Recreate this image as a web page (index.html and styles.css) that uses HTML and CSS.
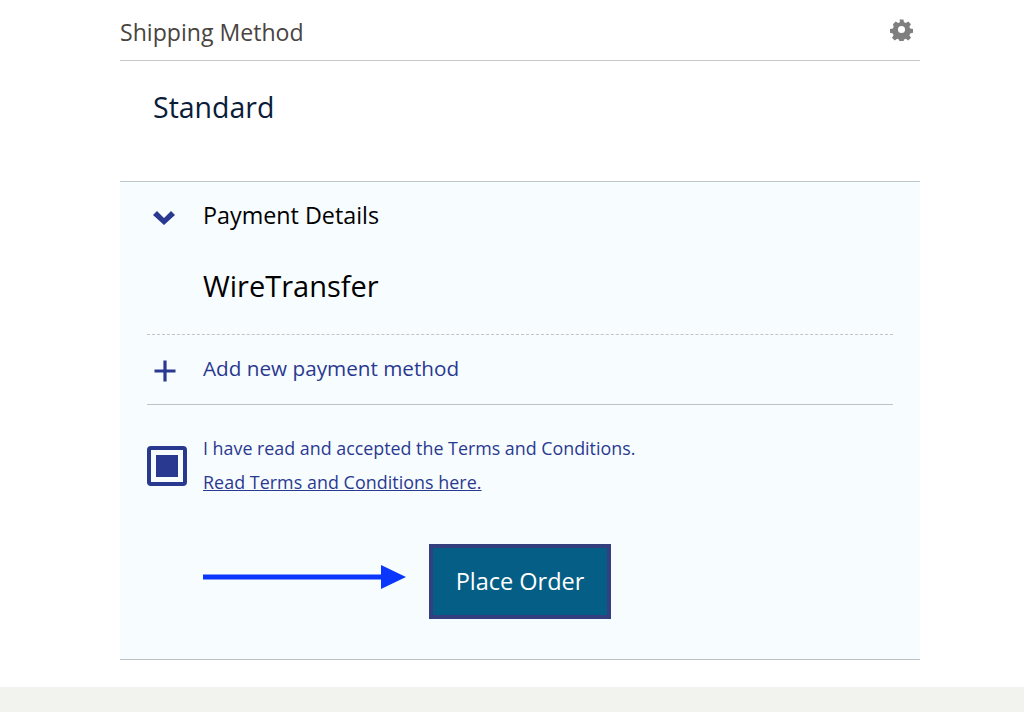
FILE: index.html
```html
<!DOCTYPE html>
<html lang="en">
<head>
    <meta charset="UTF-8">
    <meta name="viewport" content="width=device-width, initial-scale=1.0">
    <title>Checkout</title>
    <link rel="stylesheet" href="styles.css">
</head>
<body>
    <main class="checkout">
        <div class="section-head">
            <h2>Shipping Method</h2>
            <svg class="gear" viewBox="0 0 24 24" width="23" height="23">
                <path fill="#7f7f7f" fill-rule="evenodd" d="M10 1.500h4l.6 3a8 8 0 0 1 1.900.8l2.600-1.700 2.800 2.800-1.700 2.600a8 8 0 0 1 .8 1.900l3 .6v4l-3 .6a8 8 0 0 1-.8 1.900l1.700 2.600-2.800 2.800-2.600-1.700a8 8 0 0 1-1.900.8l-.6 3h-4l-.6-3a8 8 0 0 1-1.900-.8l-2.600 1.700-2.800-2.800 1.700-2.600a8 8 0 0 1-.8-1.900l-3-.6v-4l3-.6a8 8 0 0 1 .8-1.900L3.100 6.400l2.800-2.800 2.600 1.700a8 8 0 0 1 1.900-.8zM12 8.300a3.700 3.700 0 1 0 0 7.400 3.700 3.700 0 0 0 0-7.400z"/>
            </svg>
        </div>
        <div class="shipping-value">Standard</div>

        <section class="payment">
            <div class="row payment-title">
                <svg class="chevron" viewBox="0 0 24 16" width="24" height="16">
                    <path fill="#2a3990" d="M1 6 5 2l7 7 7-7 4 4-11 10z"/>
                </svg>
                <span>Payment Details</span>
            </div>
            <div class="method-name">WireTransfer</div>
            <div class="row add-method">
                <svg class="plus" viewBox="0 0 24 24" width="24" height="24">
                    <path stroke="#2a3990" stroke-width="3.200" d="M12 1.500v21M1.500 12h21"/>
                </svg>
                <a href="#">Add new payment method</a>
            </div>
            <div class="terms">
                <span class="checkbox"><span class="checkbox-mark"></span></span>
                <div class="terms-text">
                    <p>I have read and accepted the Terms and Conditions.</p>
                    <p><a href="#">Read Terms and Conditions here.</a></p>
                </div>
            </div>
            <div class="order-row">
                <svg class="arrow" viewBox="0 0 203 26" width="203" height="26">
                    <path fill="#0a37fb" d="M0 10.500h178V1l25 12-25 12v-9.500H0z"/>
                </svg>
                <button class="place-order">Place Order</button>
            </div>
        </section>
    </main>
    <div class="page-footer"></div>
</body>
</html>
```

FILE: styles.css
```css
body {
    margin: 0;
    background-color: #fff;
    font-family: "Open Sans", "Noto Sans", sans-serif;
    color: #000;
}
a {
    color: #2a3990;
    text-decoration: none;
}
p {
    margin: 0;
}
.checkout {
    width: 800px;
    margin-left: 120px;
}
.section-head {
    display: flex;
    justify-content: space-between;
    align-items: center;
    height: 60px;
    padding-right: 7px;
    border-bottom: 1px solid #c8c8c8;
}
.section-head h2 {
    margin: 4px 0 0;
    font-size: 23.100px;
    font-weight: 400;
    color: #494440;
}
.gear {
    margin-top: -1px;
}
.shipping-value {
    height: 120px;
    padding: 27px 0 0 33px;
    box-sizing: border-box;
    font-size: 28.500px;
    line-height: 38px;
    color: #0b1c38;
}
.payment {
    height: 479px;
    box-sizing: border-box;
    padding: 0 27px;
    background-color: #f7fcff;
    border-top: 1px solid #c0c4c8;
    border-bottom: 1px solid #b9bfc4;
}
.row {
    display: flex;
    align-items: center;
}
.chevron {
    flex: none;
    margin: 4px 27px 0 5px;
}
.plus {
    flex: none;
    margin: 6px 26px 0 6px;
}
.payment-title {
    height: 69px;
    padding-bottom: 4px;
    box-sizing: border-box;
    font-size: 23.300px;
}
.method-name {
    height: 84px;
    padding: 15px 0 0 56px;
    box-sizing: border-box;
    font-size: 29px;
    line-height: 40px;
    border-bottom: 1px dashed #c4c4c4;
}
.add-method {
    height: 70px;
    padding-bottom: 4px;
    box-sizing: border-box;
    font-size: 20.700px;
    border-bottom: 1px solid #bfc2c6;
}
.terms {
    display: flex;
    align-items: center;
    gap: 16px;
    margin-top: 26px;
}
.checkbox {
    display: flex;
    justify-content: center;
    align-items: center;
    width: 40px;
    height: 40px;
    box-sizing: border-box;
    border: 4px solid #2a3990;
    border-radius: 4px;
}
.checkbox-mark {
    width: 22px;
    height: 22px;
    background-color: #2a3990;
}
.terms-text {
    margin-bottom: 2px;
    font-size: 17.850px;
    line-height: 34px;
    color: #2a3990;
}
.terms-text a {
    text-decoration: underline;
    letter-spacing: 0.06px;
}
.order-row {
    display: flex;
    align-items: flex-start;
    gap: 23px;
    margin: 43px 0 0 56px;
}
.arrow {
    flex: none;
    margin-top: 20px;
}
.place-order {
    width: 182px;
    height: 75px;
    padding: 0 0 2px;
    background-color: #045e85;
    border: 4px solid #333f7f;
    color: #fff;
    font-family: inherit;
    font-size: 23.500px;
    cursor: pointer;
}
.page-footer {
    height: 25px;
    margin-top: 27px;
    background-color: #f2f2ee;
}
```
